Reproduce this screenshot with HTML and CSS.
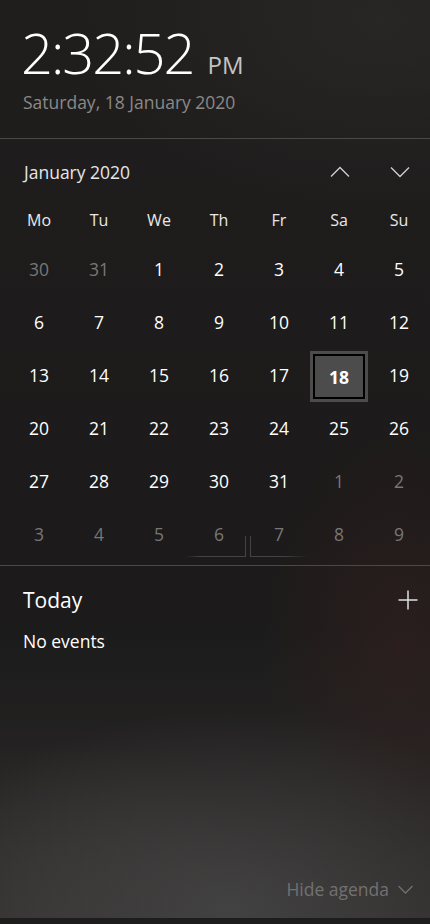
FILE: index.html
```html
<!DOCTYPE html>
<html lang="en">
<head>
    <meta charset="UTF-8">
    <meta name="viewport" content="width=device-width, initial-scale=1.0">
    <title>Clock and Calendar</title>
    <link rel="stylesheet" href="styles.css">
</head>
<body>
    <div class="flyout">
        <header class="clock">
            <div class="time">2:32:52<span class="ampm">PM</span></div>
            <div class="date">Saturday, 18 January 2020</div>
        </header>

        <section class="calendar">
            <div class="cal-head">
                <span class="month">January 2020</span>
                <div class="nav">
                    <svg class="chev" width="20" height="12" viewBox="0 0 20 12"><path d="M1 10.5 L10 1.5 L19 10.5" /></svg>
                    <svg class="chev" width="20" height="12" viewBox="0 0 20 12"><path d="M1 1.5 L10 10.5 L19 1.5" /></svg>
                </div>
            </div>

            <div class="grid">
                <div class="wd">Mo</div><div class="wd">Tu</div><div class="wd">We</div><div class="wd">Th</div><div class="wd">Fr</div><div class="wd">Sa</div><div class="wd">Su</div>

                <div class="day other">30</div><div class="day other">31</div><div class="day">1</div><div class="day">2</div><div class="day">3</div><div class="day">4</div><div class="day">5</div>
                <div class="day">6</div><div class="day">7</div><div class="day">8</div><div class="day">9</div><div class="day">10</div><div class="day">11</div><div class="day">12</div>
                <div class="day">13</div><div class="day">14</div><div class="day">15</div><div class="day">16</div><div class="day">17</div><div class="day today"><span>18</span></div><div class="day">19</div>
                <div class="day">20</div><div class="day">21</div><div class="day">22</div><div class="day">23</div><div class="day">24</div><div class="day">25</div><div class="day">26</div>
                <div class="day">27</div><div class="day">28</div><div class="day">29</div><div class="day">30</div><div class="day">31</div><div class="day other">1</div><div class="day other">2</div>
                <div class="day other">3</div><div class="day other">4</div><div class="day other">5</div><div class="day other ghost-l">6</div><div class="day other ghost-r">7</div><div class="day other">8</div><div class="day other">9</div>
            </div>
        </section>

        <section class="agenda">
            <div class="agenda-head">
                <span class="today-label">Today</span>
                <svg class="plus" width="20" height="20" viewBox="0 0 20 20"><path d="M10 0.5 V19.5 M0.5 10 H19.5" /></svg>
            </div>
            <div class="no-events">No events</div>
        </section>

        <footer class="foot">
            <span class="hide">Hide agenda</span>
            <svg class="chev-small" width="15" height="9" viewBox="0 0 15 9"><path d="M0.5 1 L7.5 8 L14.5 1" /></svg>
        </footer>
        <div class="edge"></div>
    </div>
</body>
</html>
```

FILE: styles.css
```css
body {
    margin: 0;
    padding: 0;
    background: #1c1a1a;
    font-family: 'Open Sans', 'Noto Sans', sans-serif;
    color: #fff;
}

.flyout {
    width: 430px;
    height: 924px;
    display: flex;
    flex-direction: column;
    overflow: hidden;
    background:
        radial-gradient(ellipse 320px 200px at 230px 910px, rgba(68, 67, 67, 0.95), rgba(68, 67, 67, 0) 100%),
        radial-gradient(ellipse 220px 170px at 50px 910px, rgba(54, 52, 51, 0.85), rgba(54, 52, 51, 0) 100%),
        radial-gradient(ellipse 140px 220px at 400px 640px, rgba(58, 34, 32, 0.45), rgba(58, 34, 32, 0) 100%),
        radial-gradient(ellipse 300px 200px at 380px 20px, rgba(44, 42, 41, 0.7), rgba(44, 42, 41, 0) 100%),
        linear-gradient(#201e1d, #1c1a1a 55%, #1c1b1b 68%, #2e2c2b);
}

/* clock */
.clock {
    padding: 20px 24px 25px 21px;
    border-bottom: 1px solid #4a4848;
}

.time {
    font-size: 56px;
    font-weight: 300;
    line-height: 64px;
    letter-spacing: -2px;
    color: #fff;
}

.ampm {
    font-size: 24px;
    font-weight: 400;
    line-height: 1;
    letter-spacing: 0;
    color: #c4c4c4;
    margin-left: 14px;
}

.date {
    margin-top: 7px;
    padding-left: 2px;
    font-size: 17.5px;
    line-height: 22px;
    color: #8a8988;
}

/* calendar */
.calendar {
    padding-bottom: 5px;
    border-bottom: 1px solid #4a4848;
}

.cal-head {
    margin-top: 22px;
    padding: 0 20px 0 24px;
    height: 22px;
    display: flex;
    align-items: center;
    justify-content: space-between;
}

.month {
    font-size: 17.5px;
    color: #e6e6e6;
}

.nav {
    display: flex;
    gap: 40px;
}

.chev path, .chev-small path, .plus path {
    fill: none;
    stroke: #d0d0d0;
    stroke-width: 1.3;
}

.grid {
    margin-top: 15px;
    padding-left: 9px;
    display: grid;
    grid-template-columns: repeat(7, 60px);
    grid-auto-rows: 53px;
    grid-template-rows: 44px;
}

.wd {
    display: flex;
    align-items: center;
    justify-content: center;
    font-size: 16px;
    color: #e8e8e8;
}

.day {
    display: flex;
    align-items: center;
    justify-content: center;
    font-size: 17.5px;
    color: #fff;
    position: relative;
}

.day.other {
    color: #777;
}

.day.today span {
    width: 48px;
    height: 41px;
    margin-top: 4px;
    display: flex;
    align-items: center;
    justify-content: center;
    background: #4c4c4c;
    border: 2px solid #000;
    outline: 3px solid #4c4c4c;
    font-weight: 700;
}

/* leftover hover frame under 6 and 7 */
.ghost-l::after, .ghost-r::after {
    content: '';
    position: absolute;
    bottom: 3px;
    height: 20px;
    border-bottom: 1px solid rgba(120, 120, 120, 0.45);
}

.ghost-l::after {
    left: -4px;
    right: 3px;
    border-right: 1px solid rgba(120, 120, 120, 0.45);
    -webkit-mask-image: linear-gradient(to right, transparent, #000 25%);
    mask-image: linear-gradient(to right, transparent, #000 25%);
}

.ghost-r::after {
    left: 1px;
    right: 0;
    border-left: 1px solid rgba(120, 120, 120, 0.45);
    -webkit-mask-image: linear-gradient(to left, transparent, #000 45%);
    mask-image: linear-gradient(to left, transparent, #000 45%);
}

/* agenda */
.agenda {
    padding: 20px 12px 0 23px;
}

.agenda-head {
    display: flex;
    align-items: center;
    justify-content: space-between;
    height: 28px;
}

.today-label {
    font-size: 21px;
    color: #fff;
}

.plus path {
    stroke: #e0e0e0;
    stroke-width: 1.5;
}

.no-events {
    margin-top: 16px;
    font-size: 17.5px;
    line-height: 22px;
    color: #fff;
}

.foot {
    margin-top: auto;
    padding: 0 17px 18px 0;
    display: flex;
    align-items: center;
    justify-content: flex-end;
    gap: 9px;
}

.hide {
    font-size: 17.5px;
    line-height: 22px;
    color: #727170;
}

.chev-small path {
    stroke: #727170;
}

.edge {
    height: 6px;
    background: #1e1d1d;
}
```
